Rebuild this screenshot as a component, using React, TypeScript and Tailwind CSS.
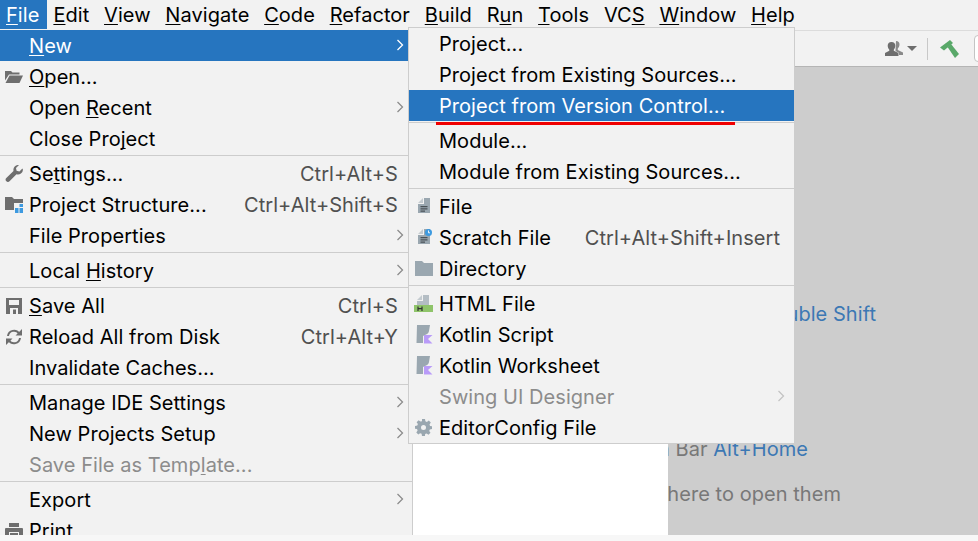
import type { ReactNode } from 'react';

const Chevron = ({ className = 'text-[#8c8c8c]' }: { className?: string }) => (
  <svg width="8" height="12" viewBox="0 0 8 12" className={className}>
    <path d="M1.500 1l5 5-5 5" fill="none" stroke="currentColor" strokeWidth="1.3" />
  </svg>
);

const U = ({ children }: { children: ReactNode }) => (
  <span className="underline decoration-1 underline-offset-[2px] [text-decoration-skip-ink:none]">{children}</span>
);

const FolderOpen = () => (
  <svg width="18" height="12" viewBox="0 0 18 12">
    <path d="M0 0h6l1.500 1.500h7v2H4L0 9.500z" fill="#6e6e6e" />
    <path d="M4.500 4.500H18L14.500 12H0.500z" fill="#6e6e6e" />
  </svg>
);

const Wrench = () => (
  <svg width="18" height="17" viewBox="0 0 18 17">
    <path d="M18 4.500a5 5 0 0 1-6.500 4.700L4.500 16.200a2.200 2.200 0 0 1-3.200-3.100L8.500 6A5 5 0 0 1 14 0l-3 3 .6 2.800 2.800.6 3-3c.4.600.6 1.300.6 2.100z" fill="#6e6e6e" />
  </svg>
);

const ProjectStructure = () => (
  <svg width="18" height="16" viewBox="0 0 18 16">
    <path d="M0 0h7l2 2h9v4H9v7H0z" fill="#6e6e6e" />
    <path d="M14.500 7H18v3h-3.500zM10 11h3.500v5H10zM14.500 11H18v5h-3.500z" fill="#3d9ae0" />
  </svg>
);

const Save = () => (
  <svg width="16" height="16" viewBox="0 0 16 16">
    <path fillRule="evenodd" d="M0 0h16v16H0zM3 2v5h10V2zM4 10v6h8v-6z" fill="#6e6e6e" />
    <path d="M7 11.500h3V16H7z" fill="#6e6e6e" />
  </svg>
);

const Reload = () => (
  <svg width="16" height="16" viewBox="0 0 16 16" fill="none">
    <path d="M2 7a6 6 0 0 1 11-2.500M14 9a6 6 0 0 1-11 2.500" stroke="#6e6e6e" strokeWidth="2" />
    <path d="M9.500 6.500H16V0zM6.500 9.500H0V16z" fill="#6e6e6e" />
  </svg>
);

const Printer = () => (
  <svg width="18" height="16" viewBox="0 0 18 16">
    <path d="M4 0h10v4H4zM1 5h16a1 1 0 0 1 1 1v6h-4v-3H4v3H0V6a1 1 0 0 1 1-1zM5 10h8v6H5z" fill="#6e6e6e" />
  </svg>
);

const FileIcon = ({ badge }: { badge?: boolean }) => (
  <svg width="16" height="18" viewBox="0 0 16 18">
    <path d="M2 5L7 0v5z" fill="#c4cbd0" />
    <path d="M8 0h6v15H2V6h6z" fill="#9aa7b0" />
    <path d="M4.500 8h7v1.200h-7zM4.500 10.300h7v1.200h-7zM4.500 12.600h4.500v1.200H4.500z" fill="#4a5257" />
    {badge && (
      <>
        <circle cx="12.500" cy="3.500" r="3.500" fill="#3d9ae0" />
        <path d="M12.500 1.500v2.300h1.500" fill="none" stroke="#fff" strokeWidth="0.9" />
      </>
    )}
  </svg>
);

const Folder = () => (
  <svg width="18" height="15" viewBox="0 0 18 15">
    <path d="M0 0h7l2 2h9v13H0z" fill="#9aa7b0" />
  </svg>
);

const HtmlIcon = () => (
  <svg width="19" height="19" viewBox="0 0 19 19">
    <path d="M3 6l5-5v5z" fill="#c4cbd0" />
    <path d="M9 1h6v10H3V7h6z" fill="#b4bdc4" />
    <path d="M0 11h19v7H0z" fill="#8fc46a" />
    <path d="M4 12.500v4.500M8 12.500v4.500M4 14.700h4" stroke="#333" strokeWidth="1.200" fill="none" />
  </svg>
);

const KotlinIcon = () => (
  <svg width="19" height="19" viewBox="0 0 19 19">
    <path d="M3 0h13l-1 6c-.3 2-1.500 3-3 3.500L9 11v7H2.500z" fill="#9aa7b0" />
    <path d="M10 10h8.500l-4.500 4 4.500 4.500H10z" fill="#b99bf8" />
  </svg>
);

const Gear = () => (
  <svg width="17" height="17" viewBox="0 0 17 17">
    <path
      fillRule="evenodd"
      d="M7 0h3l.4 2.300 1.500.6L13.800 1.600l2 2-1.300 1.900.6 1.500L17 7.300v2.800l-2.200.4-.6 1.500 1.300 1.800-2 2-1.900-1.300-1.500.6L10 17H7l-.4-2.200-1.500-.6-1.800 1.300-2-2 1.300-1.900-.6-1.500L0 9.700V7l2.300-.4.600-1.500L1.600 3.300l2-2 1.900 1.300L7 2.200zM8.500 6a2.500 2.500 0 1 0 0 5 2.500 2.500 0 0 0 0-5z"
      fill="#9aa7b0"
    />
  </svg>
);

const Users = () => (
  <svg width="18" height="15" viewBox="0 0 18 15">
    <path d="M11 0a3.500 3.500 0 0 1 3.500 3.500c0 2-1 3.200-1.700 4v1.500L18 11.500V14h-4v-2l-3.500-2z" fill="#8a8a8a" />
    <path d="M6.500 1a3.800 3.800 0 0 1 3.800 3.800c0 2-1 3-1.500 4v1l4.700 2.200v4H0v-4l4.300-2.200v-1c-.6-1-1.600-2-1.600-4A3.800 3.800 0 0 1 6.500 1z" fill="#6e6e6e" />
  </svg>
);

const Hammer = () => (
  <svg width="19" height="18" viewBox="0 0 19 18">
    <path d="M0 7.500L10 0l3 3-9 7.500z" fill="#59a869" />
    <path d="M7.500 7L11 4l8 10-4 4z" fill="#59a869" />
  </svg>
);

type RowProps = {
  label: ReactNode;
  icon?: ReactNode;
  shortcut?: string;
  arrow?: boolean;
  active?: boolean;
  disabled?: boolean;
};

const Row = ({ label, icon, shortcut, active, disabled }: RowProps) => (
  <div
    className={`flex h-[31px] items-center whitespace-nowrap ${
      active ? 'bg-[#2675bf] text-white' : disabled ? 'text-[#8c8c8c]' : 'text-black'
    }`}
  >
    <span className="flex w-[29px] shrink-0 items-center justify-center pr-[2px]">{icon}</span>
    <span>{label}</span>
    {shortcut && <span className="ml-auto text-[#505050]">{shortcut}</span>}
  </div>
);

const Sep = () => (
  <div className="h-[4px] pt-[1px]">
    <div className="h-[1px] bg-[#cdcdcd]" />
  </div>
);

const MenuRow = (props: RowProps) => (
  <div className="relative mr-[14px]">
    <Row {...props} />
    {props.arrow && (
      <span className="absolute right-[-6px] top-[9px]">
        <Chevron />
      </span>
    )}
  </div>
);

const FileMenu = () => (
  <div className="absolute left-0 top-[30px] bottom-0 w-[413px] border-r border-[#cdcdcd] bg-[#f2f2f2]">
    <div className="relative">
      <Row active label={<><U>N</U>ew</>} />
      <span className="absolute right-[8px] top-[9px]">
        <Chevron className="text-white" />
      </span>
    </div>
    <MenuRow icon={<FolderOpen />} label={<><U>O</U>pen...</>} />
    <MenuRow arrow label={<>Open <U>R</U>ecent</>} />
    <MenuRow label={<>Close Pro<U>j</U>ect</>} />
    <Sep />
    <MenuRow icon={<Wrench />} label={<>Se<U>t</U>tings...</>} shortcut="Ctrl+Alt+S" />
    <MenuRow icon={<ProjectStructure />} label="Project Structure..." shortcut="Ctrl+Alt+Shift+S" />
    <MenuRow arrow label="File Properties" />
    <Sep />
    <MenuRow arrow label={<>Local <U>H</U>istory</>} />
    <Sep />
    <MenuRow icon={<Save />} label={<><U>S</U>ave All</>} shortcut="Ctrl+S" />
    <MenuRow icon={<Reload />} label="Reload All from Disk" shortcut="Ctrl+Alt+Y" />
    <MenuRow label="Invalidate Caches..." />
    <Sep />
    <MenuRow arrow label="Manage IDE Settings" />
    <MenuRow arrow label="New Projects Setup" />
    <MenuRow disabled label={<>Save File as Temp<U>l</U>ate...</>} />
    <Sep />
    <MenuRow arrow label="Export" />
    <MenuRow icon={<Printer />} label="Print" />
  </div>
);

const NewRow = (props: RowProps) => (
  <div className="relative [&>div>span:first-child]:w-[30px] [&>div>span:first-child]:pr-[1px]">
    <Row {...props} />
    {props.arrow && (
      <span className="absolute right-[9px] top-[9px]">
        <Chevron className="text-[#c4c4c4]" />
      </span>
    )}
  </div>
);

const NewMenu = () => (
  <div className="absolute left-[408px] top-[27px] h-[417px] w-[387px] border border-[#cdcdcd] bg-[#f2f2f2]">
    <NewRow label="Project..." />
    <NewRow label="Project from Existing Sources..." />
    <NewRow active label="Project from Version Control..." />
    <Sep />
    <NewRow label="Module..." />
    <NewRow label="Module from Existing Sources..." />
    <Sep />
    <NewRow icon={<FileIcon />} label="File" />
    <div className="pr-[14px]">
      <NewRow icon={<FileIcon badge />} label="Scratch File" shortcut="Ctrl+Alt+Shift+Insert" />
    </div>
    <NewRow icon={<Folder />} label="Directory" />
    <Sep />
    <NewRow icon={<HtmlIcon />} label="HTML File" />
    <NewRow icon={<KotlinIcon />} label="Kotlin Script" />
    <NewRow icon={<KotlinIcon />} label="Kotlin Worksheet" />
    <NewRow disabled arrow label="Swing UI Designer" />
    <NewRow icon={<Gear />} label="EditorConfig File" />
  </div>
);

const menus: ReactNode[] = [
  <><U>E</U>dit</>,
  <><U>V</U>iew</>,
  <><U>N</U>avigate</>,
  <><U>C</U>ode</>,
  <><U>R</U>efactor</>,
  <><U>B</U>uild</>,
  <>R<U>u</U>n</>,
  <><U>T</U>ools</>,
  <>VC<U>S</U></>,
  <><U>W</U>indow</>,
  <><U>H</U>elp</>,
];

export default function App() {
  return (
    <div className="h-[541px] w-[978px] overflow-hidden bg-[#f7f7f7] font-['Inter',sans-serif] text-[20px] tracking-[0.05px]">
      <div className="relative flex h-[535px] flex-col overflow-hidden">
        <div className="flex h-[30px] shrink-0 items-center bg-[#f2f2f2] text-black">
          <div className="mr-[-1px] flex h-[29px] w-[47px] items-center self-start bg-[#2675bf] pl-[6px] text-white">
            <span><U>F</U>ile</span>
          </div>
          {menus.map((m, i) => (
            <div key={i} className="px-[7.4px]">
              {m}
            </div>
          ))}
        </div>
        <div className="flex h-[37px] shrink-0 items-center justify-end border-y border-t-[#dcdcdc] border-b-[#b5b5b5] bg-[#f2f2f2]">
          <Users />
          <svg width="10" height="5" viewBox="0 0 10 5" className="ml-[4px] mr-[10px]">
            <path d="M0 0h10L5 5z" fill="#6e6e6e" />
          </svg>
          <div className="h-[22px] w-[1px] bg-[#c8c8c8]" />
          <div className="ml-[12px] mr-[15px]">
            <Hammer />
          </div>
          <div className="-mr-[10px] h-[27px] w-[14px] rounded-[4px] border border-[#c4c4c4] bg-white" />
        </div>
        <div className="flex min-h-0 flex-1">
          <div className="w-[668px] shrink-0 bg-white" />
          <div className="min-w-0 flex-1 overflow-hidden bg-[#cdcdcd] text-[#787878]">
            <div className="flex justify-end whitespace-nowrap pr-[102px] pt-[232px]">
              <span>Search Everywhere <span className="text-[#3c78b4]">Double Shift</span></span>
            </div>
            <div className="mt-[105px] flex justify-end whitespace-nowrap pr-[170px]">
              <span>Navigation Bar <span className="text-[#3c78b4]">Alt+Home</span></span>
            </div>
            <div className="mt-[15px] flex justify-end whitespace-nowrap pr-[137px]">
              <span>Drop files here to open them</span>
            </div>
          </div>
        </div>
        <FileMenu />
        <NewMenu />
        <div className="absolute left-[436px] top-[122px] h-[3px] w-[299px] bg-[#f00000]" />
      </div>
    </div>
  );
}
